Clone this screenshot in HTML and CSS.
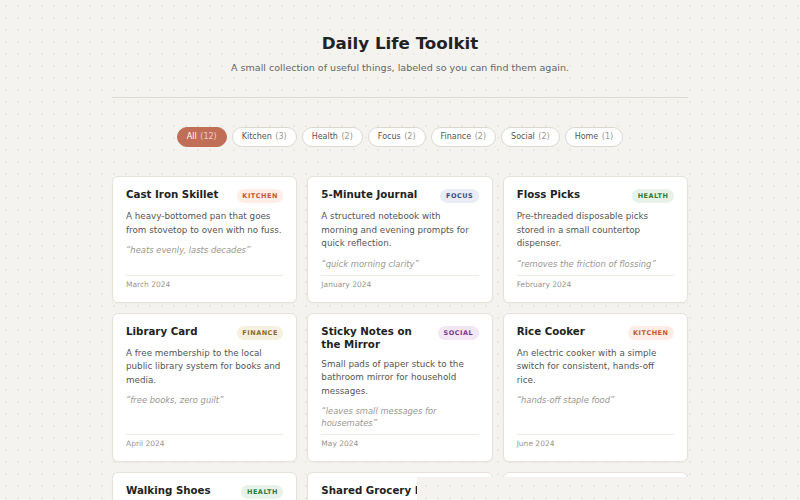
FILE: index.html
```html
<!DOCTYPE html>
<html lang="en">
<head>
<meta charset="utf-8">
<title>Daily Life Toolkit</title>
<link rel="stylesheet" href="styles.css">
</head>
<body>
<main class="page">
  <header class="masthead">
    <h1 class="title">Daily Life Toolkit</h1>
    <p class="subtitle">A small collection of useful things, labeled so you can find them again.</p>
  </header>

  <nav class="filters">
    <button class="pill is-active">All <span class="count">(12)</span></button>
    <button class="pill">Kitchen <span class="count">(3)</span></button>
    <button class="pill">Health <span class="count">(2)</span></button>
    <button class="pill">Focus <span class="count">(2)</span></button>
    <button class="pill">Finance <span class="count">(2)</span></button>
    <button class="pill">Social <span class="count">(2)</span></button>
    <button class="pill">Home <span class="count">(1)</span></button>
  </nav>

  <section class="grid">
    <article class="card">
      <div class="card-head"><h2 class="card-title">Cast Iron Skillet</h2><span class="tag tag-kitchen">Kitchen</span></div>
      <p class="card-desc">A heavy-bottomed pan that goes from stovetop to oven with no fuss.</p>
      <p class="card-quote">“heats evenly, lasts decades”</p>
      <div class="card-foot">March 2024</div>
    </article>
    <article class="card">
      <div class="card-head"><h2 class="card-title">5-Minute Journal</h2><span class="tag tag-focus">Focus</span></div>
      <p class="card-desc">A structured notebook with morning and evening prompts for quick reflection.</p>
      <p class="card-quote">“quick morning clarity”</p>
      <div class="card-foot">January 2024</div>
    </article>
    <article class="card">
      <div class="card-head"><h2 class="card-title">Floss Picks</h2><span class="tag tag-health">Health</span></div>
      <p class="card-desc">Pre-threaded disposable picks stored in a small countertop dispenser.</p>
      <p class="card-quote">“removes the friction of flossing”</p>
      <div class="card-foot">February 2024</div>
    </article>
    <article class="card">
      <div class="card-head"><h2 class="card-title">Library Card</h2><span class="tag tag-finance">Finance</span></div>
      <p class="card-desc">A free membership to the local public library system for books and media.</p>
      <p class="card-quote">“free books, zero guilt”</p>
      <div class="card-foot">April 2024</div>
    </article>
    <article class="card">
      <div class="card-head"><h2 class="card-title">Sticky Notes on the Mirror</h2><span class="tag tag-social">Social</span></div>
      <p class="card-desc">Small pads of paper stuck to the bathroom mirror for household messages.</p>
      <p class="card-quote">“leaves small messages for housemates”</p>
      <div class="card-foot">May 2024</div>
    </article>
    <article class="card">
      <div class="card-head"><h2 class="card-title">Rice Cooker</h2><span class="tag tag-kitchen">Kitchen</span></div>
      <p class="card-desc">An electric cooker with a simple switch for consistent, hands-off rice.</p>
      <p class="card-quote">“hands-off staple food”</p>
      <div class="card-foot">June 2024</div>
    </article>
    <article class="card">
      <div class="card-head"><h2 class="card-title">Walking Shoes</h2><span class="tag tag-health">Health</span></div>
      <p class="card-desc">A comfortable pair kept by the door for short daily walks.</p>
      <p class="card-quote">“easiest exercise there is”</p>
      <div class="card-foot">July 2024</div>
    </article>
    <article class="card">
      <div class="card-head"><h2 class="card-title">Shared Grocery List</h2><span class="tag tag-home">Home</span></div>
      <p class="card-desc">One list on everyone's phone so nothing gets bought twice.</p>
      <p class="card-quote">“no more duplicate milk”</p>
      <div class="card-foot">August 2024</div>
    </article>
    <article class="card">
      <div class="card-head"><h2 class="card-title">Budget Envelope</h2><span class="tag tag-finance">Finance</span></div>
      <p class="card-desc">A simple envelope system for weekly cash spending.</p>
      <p class="card-quote">“spending you can see”</p>
      <div class="card-foot">September 2024</div>
    </article>
  </section>
</main>
<div class="veil"></div>
</body>
</html>
```

FILE: styles.css
```css
* { box-sizing: border-box; }

html, body {
  margin: 0;
  padding: 0;
}

body {
  font-family: "DejaVu Sans", "Noto Sans", sans-serif;
  color: #222;
  background-color: #f4f3ef;
  background-image: radial-gradient(circle, #ebe8e2 0.7px, transparent 1px);
  background-size: 12px 12px;
  background-attachment: fixed;
}

.page {
  width: 576px;
  margin: 0 auto;
  padding-top: 31px;
}

.masthead {
  text-align: center;
  padding-bottom: 22px;
  border-bottom: 1px solid #dcd9d2;
}

.title {
  margin: 0;
  font-size: 16.7px;
  line-height: 24px;
  font-weight: 700;
  color: #222;
}

.subtitle {
  margin: 6px 0 0;
  font-size: 9.55px;
  line-height: 14px;
  color: #666;
}

.filters {
  display: flex;
  justify-content: center;
  gap: 5px;
  margin-top: 29px;
}

.pill {
  font-family: inherit;
  font-size: 8px;
  line-height: 12px;
  padding: 3px 9px;
  border: 1px solid #dcd8d0;
  border-radius: 999px;
  background: #fff;
  color: #555;
  cursor: pointer;
}

.pill .count {
  color: #9a9690;
  margin-left: 1px;
}

.pill.is-active {
  background: #c06f56;
  border-color: #c06f56;
  color: #fff;
}

.pill.is-active .count {
  color: #f0d0c4;
}

.grid {
  display: grid;
  grid-template-columns: repeat(3, 1fr);
  gap: 10px;
  margin-top: 29px;
}

.card {
  display: flex;
  flex-direction: column;
  background: #fff;
  border: 1px solid #e6e2db;
  border-radius: 6px;
  padding: 11px 13px 11px;
  box-shadow: 0 1px 2px rgba(60, 50, 30, 0.04);
}

.card-head {
  display: flex;
  justify-content: space-between;
  align-items: flex-start;
  gap: 6px;
}

.card-title {
  margin: 0;
  font-size: 10.25px;
  line-height: 13px;
  font-weight: 700;
  color: #222;
}

.tag {
  flex-shrink: 0;
  margin-top: 1px;
  padding: 0 5.5px;
  border-radius: 999px;
  font-size: 6.5px;
  line-height: 14px;
  font-weight: 700;
  letter-spacing: 0.5px;
  text-transform: uppercase;
}

.tag-kitchen { background: #fdede6; color: #c4582f; }
.tag-focus { background: #e9ecf5; color: #3a4a8c; }
.tag-health { background: #e7f3e8; color: #2f7d3b; }
.tag-finance { background: #f6f0e1; color: #8a6c27; }
.tag-social { background: #f3e7f5; color: #7a3a8c; }
.tag-home { background: #eef0f2; color: #4d5866; }

.card-desc {
  margin: 7px 0 0;
  font-size: 8.75px;
  line-height: 13.5px;
  color: #555;
}

.card-quote {
  margin: 7px 0 5px;
  font-size: 8.4px;
  line-height: 12px;
  font-style: italic;
  color: #9a9792;
}

.card-foot {
  margin-top: auto;
  padding-top: 3px;
  border-top: 1px solid #eeebe5;
  font-size: 7.5px;
  line-height: 12px;
  color: #999590;
}

.veil {
  position: fixed;
  left: 417px;
  top: 477px;
  right: 0;
  bottom: 0;
  background-color: #f4f3ef;
  background-image: radial-gradient(circle, #ebe8e2 0.7px, transparent 1px);
  background-size: 12px 12px;
  background-attachment: fixed;
}
```
